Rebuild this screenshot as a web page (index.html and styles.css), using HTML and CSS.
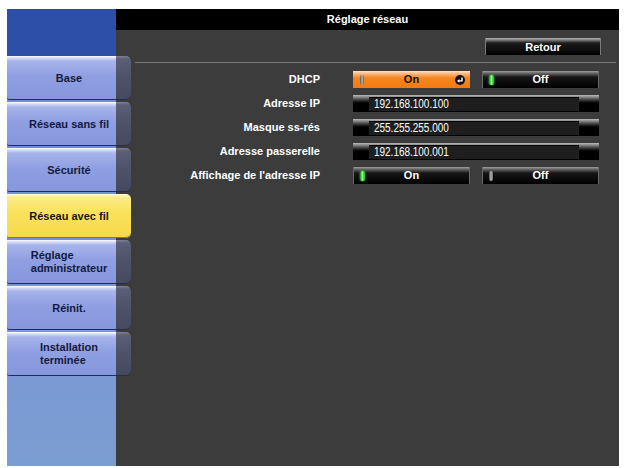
FILE: index.html
```html
<!DOCTYPE html>
<html lang="fr">
<head>
<meta charset="utf-8">
<title>Réglage réseau</title>
<link rel="stylesheet" href="styles.css">
</head>
<body>
<div class="screen">
  <nav class="sidebar">
    <div class="sidebar-head"></div>
    <ul class="menu">
      <li class="menu-item"><span>Base</span></li>
      <li class="menu-item"><span>Réseau sans fil</span></li>
      <li class="menu-item"><span>Sécurité</span></li>
      <li class="menu-item active"><span>Réseau avec fil</span></li>
      <li class="menu-item"><span class="two">Réglage<br>administrateur</span></li>
      <li class="menu-item"><span>Réinit.</span></li>
      <li class="menu-item"><span class="two">Installation<br>terminée</span></li>
    </ul>
  </nav>
  <main class="panel">
    <header class="title-bar">Réglage réseau</header>
    <div class="toolbar"><button class="btn-back">Retour</button></div>
    <hr class="sep">
    <div class="form">
      <div class="lbl">DHCP</div>
      <div class="toggle-pair">
        <div class="toggle selected">
          <i class="led grey"></i><span class="tl">On</span>
          <svg class="enter" width="10" height="10" viewBox="0 0 10 10"><circle cx="5" cy="5" r="5" fill="#111"/><path d="M7 2.4V5.9H4" stroke="#fff" stroke-width="1.4" fill="none"/><polygon points="2,5.9 4.4,4 4.4,7.8" fill="#fff"/></svg>
        </div>
        <div class="toggle"><i class="led green"></i><span class="tl">Off</span><span></span></div>
      </div>

      <div class="lbl">Adresse IP</div>
      <div class="field"><div class="field-box"><span class="ip">192.168.100.100</span></div></div>

      <div class="lbl">Masque ss-rés</div>
      <div class="field"><div class="field-box"><span class="ip">255.255.255.000</span></div></div>

      <div class="lbl">Adresse passerelle</div>
      <div class="field"><div class="field-box"><span class="ip">192.168.100.001</span></div></div>

      <div class="lbl">Affichage de l'adresse IP</div>
      <div class="toggle-pair">
        <div class="toggle"><i class="led green"></i><span class="tl">On</span><span></span></div>
        <div class="toggle"><i class="led grey"></i><span class="tl">Off</span><span></span></div>
      </div>
    </div>
  </main>
</div>
</body>
</html>
```
FILE: styles.css
```css
* { box-sizing: border-box; }
html, body { margin: 0; padding: 0; background: #fff; }
body {
  font-family: "Liberation Sans", Arial, sans-serif;
  font-size: 11px;
}

.screen {
  margin: 9px 0 0 7px;
  width: 612px;
  height: 457px;
  display: grid;
  grid-template-columns: 109px 1fr;
  background: #3c3c3c;
}

/* Sidebar */
.sidebar {
  display: flex;
  flex-direction: column;
  background: linear-gradient(to bottom, #2e4fa7 0, #2e4fa7 47px, #6f88d4 47px, #7a97d7 70%, #7b9ed1 100%);
}
.sidebar-head { height: 47px; flex: none; }
.menu {
  list-style: none;
  margin: 0;
  padding: 0;
  display: flex;
  flex-direction: column;
  gap: 2px;
}
.menu-item {
  position: relative;
  z-index: 1;
  width: 124px;
  height: 44px;
  display: flex;
  align-items: center;
  justify-content: center;
  font-weight: bold;
  color: #141a3e;
  border-radius: 0 5px 5px 2px;
  background:
    linear-gradient(to bottom, #7d8196 0, #5b5f76 3px, #4e5268 50%, #45495e 100%) right top / 15px 100% no-repeat,
    linear-gradient(to bottom, #ffffff 0, #d6dcf7 2px, #a8b5eb 5px, #8f9fe2 45%, #8596dc 100%);
  box-shadow: inset 0 -1px 0 #262b52;
}
.menu-item.active {
  background: linear-gradient(to bottom, #fffbe2 0, #fcec8c 3px, #f9e35c 40%, #f6d84a 100%);
  box-shadow: inset 0 -1px 0 #8a7a30;
  color: #161616;
}
.menu-item .two {
  text-align: left;
  line-height: 13px;
}

/* Panel */
.panel {
  display: flex;
  flex-direction: column;
  min-width: 0;
}
.title-bar {
  height: 21px;
  line-height: 21px;
  background: #000;
  color: #fff;
  font-weight: bold;
  text-align: center;
}
.toolbar {
  display: flex;
  justify-content: flex-end;
  padding: 8px 18px 0 0;
}
.btn-back {
  width: 116px;
  height: 17px;
  border: 0;
  padding: 0;
  font: bold 11px "Liberation Sans", Arial, sans-serif;
  color: #fff;
  background: linear-gradient(to bottom, #b4b4b4 0, #7c7c7c 2px, #1c1c1c 5px, #000 100%);
  box-shadow: inset 1px 0 0 #7a7a7a, inset -1px 0 0 #7a7a7a;
}
.sep {
  height: 1px;
  border: 0;
  margin: 7px 3px 0 19px;
  background: #7a7a7a;
}

.form {
  display: grid;
  grid-template-columns: 204px 246px;
  column-gap: 33px;
  row-gap: 7px;
  grid-auto-rows: 17px;
  margin-top: 8px;
}
.lbl {
  color: #fff;
  font-weight: bold;
  text-align: right;
  line-height: 17px;
  white-space: nowrap;
}

.toggle-pair {
  display: grid;
  grid-template-columns: 117px 117px;
  column-gap: 12px;
}
.toggle {
  height: 17px;
  display: grid;
  grid-template-columns: 20px 1fr 20px;
  align-items: center;
  color: #fff;
  font-weight: bold;
  background: linear-gradient(to bottom, #a0a0a0 0, #6c6c6c 2px, #161616 6px, #000 100%);
  box-shadow: inset 1px 0 0 #6a6a6a, inset -1px 0 0 #6a6a6a;
}
.toggle.selected {
  color: #111;
  background: linear-gradient(to bottom, #ffe4c6 0, #fbb37b 3px, #f5861f 7px, #f27a12 100%);
  box-shadow: none;
}
.tl { text-align: center; line-height: 17px; }
.led {
  display: block;
  height: 10px;
  border-radius: 2px;
  margin-left: 7px;
}
.led.grey {
  width: 4px;
  background: linear-gradient(to right, #555, #b4b4b4 50%, #666);
}
.led.green {
  width: 5px;
  background: linear-gradient(to right, #0b8a0b, #8cff8c 45%, #1bb01b);
  box-shadow: 0 0 2px #3f3;
}
.enter {
  display: block;
  justify-self: end;
  margin-right: 5px;
}

.field {
  height: 17px;
  display: flex;
  padding: 2px 20px 1px 16px;
  background: linear-gradient(to bottom, #bababa 0, #8a8a8a 2px, #3a3a3a 5px, #000 8px, #000 100%);
}
.field-box {
  flex: 1;
  background: #1e1e1e;
  box-shadow: inset 0 1px 0 #000;
  color: #fff;
  padding-left: 5px;
  overflow: hidden;
  white-space: nowrap;
}
.ip {
  display: inline-block;
  font-size: 12px;
  line-height: 14px;
  transform: scaleX(0.83);
  transform-origin: left center;
}
```
